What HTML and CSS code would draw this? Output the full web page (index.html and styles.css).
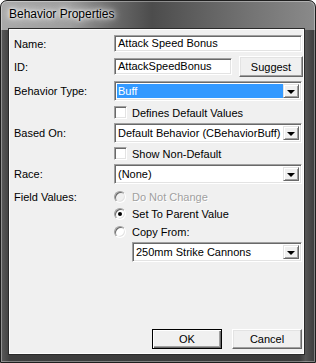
FILE: index.html
```html
<!DOCTYPE html>
<html lang="en">
<head>
  <meta charset="UTF-8" />
  <title>Behavior Properties</title>
  <link rel="stylesheet" href="styles.css">
</head>
<body>
  <div class="window">
    <div class="titlebar"><span class="title">Behavior Properties</span></div>

    <div class="client">
      <div class="row r-name">
        <span class="lbl">Name:</span>
        <div class="edit full">Attack Speed Bonus</div>
      </div>

      <div class="row r-id">
        <span class="lbl">ID:</span>
        <div class="ctl id-ctl">
          <div class="edit id-edit">AttackSpeedBonus</div>
          <div class="btn suggest">Suggest</div>
        </div>
      </div>

      <div class="row r-type">
        <span class="lbl">Behavior Type:</span>
        <div class="combo full">
          <div class="combo-value selected">Buff</div>
          <div class="combo-arrow"><span class="tri"></span></div>
        </div>
      </div>

      <div class="row r-check1">
        <span class="lbl"></span>
        <div class="opt"><span class="check"></span>Defines Default Values</div>
      </div>

      <div class="row r-based">
        <span class="lbl">Based On:</span>
        <div class="combo full">
          <div class="combo-value">Default Behavior (CBehaviorBuff)</div>
          <div class="combo-arrow"><span class="tri"></span></div>
        </div>
      </div>

      <div class="row r-check2">
        <span class="lbl"></span>
        <div class="opt"><span class="check"></span>Show Non-Default</div>
      </div>

      <div class="row r-race">
        <span class="lbl">Race:</span>
        <div class="combo full">
          <div class="combo-value">(None)</div>
          <div class="combo-arrow"><span class="tri"></span></div>
        </div>
      </div>

      <div class="row r-radio1">
        <span class="lbl">Field Values:</span>
        <div class="opt disabled"><span class="radio"></span>Do Not Change</div>
      </div>

      <div class="row r-radio2">
        <span class="lbl"></span>
        <div class="opt"><span class="radio checked"></span>Set To Parent Value</div>
      </div>

      <div class="row r-radio3">
        <span class="lbl"></span>
        <div class="opt"><span class="radio"></span>Copy From:</div>
      </div>

      <div class="row r-copy">
        <span class="lbl"></span>
        <div class="combo copy">
          <div class="combo-value">250mm Strike Cannons</div>
          <div class="combo-arrow"><span class="tri"></span></div>
        </div>
      </div>

      <div class="buttons">
        <div class="btn default">OK</div>
        <div class="btn">Cancel</div>
      </div>
    </div>
  </div>
</body>
</html>
```

FILE: styles.css
```css
* {
  box-sizing: border-box;
}

body {
  margin: 0;
  background-color: #fff;
  font-family: "Liberation Sans", Arial, sans-serif;
  font-size: 11px;
  color: #000;
}

.window {
  width: 316px;
  height: 363px;
  display: flex;
  flex-direction: column;
  padding: 0 11px 8px 8px;
  border: 1px solid #1e1e1e;
  border-radius: 7px 7px 0 0;
  background:
    linear-gradient(to right, #a9a9a9 0%, #9e9e9e 22%, #6a6a6a 36%, #4c4c4c 48%, #5e5e5e 62%, #727272 78%, #8a8a8a 100%) top / 100% 29px no-repeat,
    linear-gradient(to right, #5a5a5a 0%, #3e3e3e 3%, #3a3a3a 95%, #555 97%, #3a3a3a 100%);
  box-shadow: inset 0 0 0 1px rgba(255,255,255,0.35);
}

.titlebar {
  height: 28px;
  display: flex;
  align-items: center;
  padding-bottom: 2px;
}

.title {
  font-size: 12px;
  color: #000;
  text-shadow: 0 0 6px #fff, 0 0 10px #fff, 0 0 3px #fff;
}

.client {
  flex: 1;
  display: flex;
  flex-direction: column;
  padding: 5px 1px 4px 4px;
  background-color: #f0f0f0;
  border: 1px solid #fdfdfd;
  box-shadow: 0 0 0 1px #2a2a2a;
}

.row {
  display: flex;
  align-items: center;
}

.lbl {
  width: 100px;
  flex: none;
}

.r-name { height: 17px; }
.r-id { height: 21px; margin-top: 4px; }
.r-type { height: 20px; margin-top: 4px; }
.r-check1 { height: 15px; margin-top: 4px; }
.r-based { height: 20px; margin-top: 3px; }
.r-check2 { height: 15px; margin-top: 3px; }
.r-race { height: 20px; margin-top: 3px; }
.r-radio1 { height: 16px; margin-top: 5px; }
.r-radio2 { height: 16px; margin-top: 1px; }
.r-radio3 { height: 16px; margin-top: 2px; }
.r-copy { height: 20px; margin-top: 2px; }

.full {
  width: 189px;
}

/* sunken classic edit box */
.edit {
  height: 17px;
  padding: 1px 3px 0;
  line-height: 13px;
  background-color: #fff;
  border: 1px solid;
  border-color: #a0a0a0 #fff #fff #a0a0a0;
  box-shadow: inset 1px 1px 0 #696969, inset -1px -1px 0 #e3e3e3;
  white-space: nowrap;
  overflow: hidden;
}

.id-ctl {
  display: flex;
  align-items: center;
  gap: 7px;
}

.id-edit {
  width: 118px;
}

.btn {
  display: flex;
  align-items: center;
  justify-content: center;
  width: 70px;
  height: 21px;
  background-color: #f0f0f0;
  border: 1px solid;
  border-color: #fff #696969 #696969 #fff;
  box-shadow: inset -1px -1px 0 #a0a0a0, inset 1px 1px 0 #e3e3e3;
}

.suggest {
  width: 64px;
}

.btn.default {
  border: 1px solid #000;
  box-shadow: inset 1px 1px 0 #fff, inset -1px -1px 0 #696969, inset -2px -2px 0 #a0a0a0;
}

.combo {
  display: flex;
  height: 20px;
  padding: 2px;
  background-color: #fff;
  border: 1px solid;
  border-color: #a0a0a0 #fff #fff #a0a0a0;
  box-shadow: inset 1px 1px 0 #696969, inset -1px -1px 0 #e3e3e3;
}

.combo.copy {
  width: 171px;
  margin-left: 18px;
}

.combo-value {
  flex: 1;
  display: flex;
  align-items: center;
  padding-left: 1px;
  white-space: nowrap;
  overflow: hidden;
}

.combo-value.selected {
  background-color: #3399ff;
  color: #fff;
}

.combo-arrow {
  width: 16px;
  flex: none;
  display: flex;
  align-items: center;
  justify-content: center;
  background-color: #f0f0f0;
  border: 1px solid;
  border-color: #e3e3e3 #696969 #696969 #e3e3e3;
  box-shadow: inset 1px 1px 0 #fff, inset -1px -1px 0 #a0a0a0;
}

.tri {
  width: 0;
  height: 0;
  border-left: 4px solid transparent;
  border-right: 4px solid transparent;
  border-top: 4px solid #000;
  margin-top: 1px;
}

.opt {
  display: flex;
  align-items: center;
  white-space: nowrap;
}

.check {
  width: 13px;
  height: 13px;
  margin-right: 5px;
  background-color: #fff;
  border: 1px solid;
  border-color: #a0a0a0 #fff #fff #a0a0a0;
  box-shadow: inset 1px 1px 0 #696969, inset -1px -1px 0 #e3e3e3;
}

.radio {
  width: 12px;
  height: 12px;
  margin-right: 6px;
  display: flex;
  align-items: center;
  justify-content: center;
  border-radius: 50%;
  background-color: #fff;
  border: 1px solid;
  border-color: #a0a0a0 #fff #fff #a0a0a0;
  box-shadow: inset 1px 1px 0 #696969, inset -1px -1px 0 #e3e3e3;
}

.radio.checked::after {
  content: "";
  width: 4px;
  height: 4px;
  border-radius: 50%;
  background-color: #000;
}

.opt.disabled {
  color: #a0a0a0;
  text-shadow: 1px 1px 0 #fff;
}

.opt.disabled .radio {
  background-color: #f0f0f0;
}

.buttons {
  margin-top: auto;
  display: flex;
  justify-content: flex-end;
  gap: 10px;
}

.buttons .btn {
  height: 20px;
}
```
